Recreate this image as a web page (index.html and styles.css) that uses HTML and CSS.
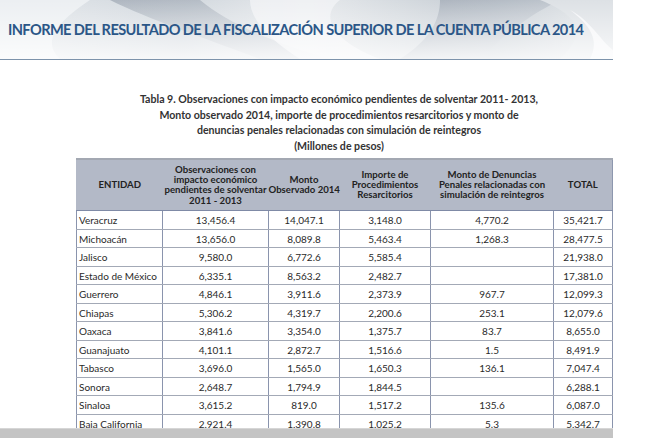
FILE: index.html
```html
<!DOCTYPE html>
<html lang="es">
<head>
<meta charset="utf-8">
<title>Informe</title>
<link rel="stylesheet" href="styles.css">
</head>
<body>
<header class="banner">
  <svg class="banner-bg" width="613" height="59" viewBox="0 0 613 59" preserveAspectRatio="none" aria-hidden="true">
    <defs>
      <linearGradient id="base" x1="0" y1="0" x2="1" y2="0">
        <stop offset="0" stop-color="#e2e6ea"/>
        <stop offset="0.3" stop-color="#d2d8de"/>
        <stop offset="0.5" stop-color="#e6e9ec"/>
        <stop offset="0.8" stop-color="#c5ccd3"/>
        <stop offset="1" stop-color="#e4e7ea"/>
      </linearGradient>
      <linearGradient id="fade" x1="0" y1="0" x2="0" y2="1">
        <stop offset="0" stop-color="#ffffff" stop-opacity="0"/>
        <stop offset="1" stop-color="#ffffff" stop-opacity="0.8"/>
      </linearGradient>
      <linearGradient id="dark" x1="0" y1="0" x2="1" y2="1">
        <stop offset="0" stop-color="#a4adb8"/>
        <stop offset="1" stop-color="#d3d8de"/>
      </linearGradient>
    </defs>
    <rect width="613" height="59" fill="url(#base)"/>
    <path d="M0 0 H90 C60 20 40 40 60 59 H0 Z" fill="#eceff2"/>
    <path d="M110 0 H200 C230 25 280 45 330 59 H260 C210 40 150 20 110 0 Z" fill="url(#dark)" opacity="0.8"/>
    <path d="M250 0 H340 C320 15 330 40 380 59 H300 C270 40 250 20 250 0 Z" fill="#f1f3f5" opacity="0.8"/>
    <path d="M440 0 H560 C520 20 500 40 480 59 H400 C430 40 440 20 440 0 Z" fill="url(#dark)" opacity="0.9"/>
    <path d="M540 0 H613 V59 H560 C580 40 590 20 540 0 Z" fill="#dde1e5"/>
    <path d="M570 10 C590 20 600 40 613 50 V59 H590 C600 40 590 25 570 10 Z" fill="#f4f5f7"/>
    <rect width="613" height="59" fill="url(#fade)"/>
  </svg>
  <h1 class="banner-title">INFORME DEL RESULTADO DE LA FISCALIZACIÓN SUPERIOR DE LA CUENTA PÚBLICA 2014</h1>
</header>
<main class="page">
  <div class="caption">
    <p>Tabla 9. Observaciones con impacto económico pendientes de solventar 2011- 2013,</p>
    <p>Monto observado 2014, importe de procedimientos resarcitorios y monto de</p>
    <p>denuncias penales relacionadas con simulación de reintegros</p>
    <p>(Millones de pesos)</p>
  </div>
  <table class="data">
    <colgroup>
      <col class="c1"><col class="c2"><col class="c3"><col class="c4"><col class="c5"><col class="c6">
    </colgroup>
    <thead>
      <tr>
        <th>ENTIDAD</th>
        <th>Observaciones con<br>impacto económico<br>pendientes de solventar<br>2011 - 2013</th>
        <th>Monto<br>Observado 2014</th>
        <th>Importe de<br>Procedimientos<br>Resarcitorios</th>
        <th>Monto de Denuncias<br>Penales relacionadas con<br>simulación de reintegros</th>
        <th>TOTAL</th>
      </tr>
    </thead>
    <tbody>
      <tr><td>Veracruz</td><td>13,456.4</td><td>14,047.1</td><td>3,148.0</td><td>4,770.2</td><td>35,421.7</td></tr>
      <tr><td>Michoacán</td><td>13,656.0</td><td>8,089.8</td><td>5,463.4</td><td>1,268.3</td><td>28,477.5</td></tr>
      <tr><td>Jalisco</td><td>9,580.0</td><td>6,772.6</td><td>5,585.4</td><td></td><td>21,938.0</td></tr>
      <tr><td>Estado de México</td><td>6,335.1</td><td>8,563.2</td><td>2,482.7</td><td></td><td>17,381.0</td></tr>
      <tr><td>Guerrero</td><td>4,846.1</td><td>3,911.6</td><td>2,373.9</td><td>967.7</td><td>12,099.3</td></tr>
      <tr><td>Chiapas</td><td>5,306.2</td><td>4,319.7</td><td>2,200.6</td><td>253.1</td><td>12,079.6</td></tr>
      <tr><td>Oaxaca</td><td>3,841.6</td><td>3,354.0</td><td>1,375.7</td><td>83.7</td><td>8,655.0</td></tr>
      <tr><td>Guanajuato</td><td>4,101.1</td><td>2,872.7</td><td>1,516.6</td><td>1.5</td><td>8,491.9</td></tr>
      <tr><td>Tabasco</td><td>3,696.0</td><td>1,565.0</td><td>1,650.3</td><td>136.1</td><td>7,047.4</td></tr>
      <tr><td>Sonora</td><td>2,648.7</td><td>1,794.9</td><td>1,844.5</td><td></td><td>6,288.1</td></tr>
      <tr><td>Sinaloa</td><td>3,615.2</td><td>819.0</td><td>1,517.2</td><td>135.6</td><td>6,087.0</td></tr>
      <tr><td>Baja California</td><td>2,921.4</td><td>1,390.8</td><td>1,025.2</td><td>5.3</td><td>5,342.7</td></tr>
    </tbody>
  </table>
</main>
<div class="scrollbar"></div>
</body>
</html>
```
FILE: styles.css
```css
html, body {
  margin: 0;
  padding: 0;
  background: #ffffff;
}
body {
  width: 670px;
  height: 440px;
  overflow: hidden;
  font-family: Lato, "Open Sans", sans-serif;
}
.banner {
  position: relative;
  width: 613px;
  height: 59px;
  border-bottom: 1px solid #7d93ab;
  display: flex;
  align-items: center;
}
.banner-bg {
  position: absolute;
  left: 0;
  top: 0;
}
.banner-title {
  position: relative;
  margin: 0 0 0 8px;
  font-size: 14.6px;
  font-weight: 700;
  color: #2b5687;
  letter-spacing: -0.6px;
  white-space: nowrap;
  line-height: 1;
  padding-top: 2px;
}
.page {
  width: 613px;
  height: 368px;
  overflow: hidden;
}
.caption {
  padding-top: 32px;
  width: 613px;
  box-sizing: border-box;
  padding-left: 65px;
  text-align: center;
  color: #333333;
  font-size: 10.6px;
  font-weight: 700;
}
.caption p {
  margin: 0;
  line-height: 15.6px;
}
.data {
  margin: 4px 0 0 76px;
  border-collapse: collapse;
  table-layout: fixed;
  width: 536px;
  font-size: 10px;
  color: #2a2a2a;
}
.c1 { width: 86px; }
.c2 { width: 106px; }
.c3 { width: 71px; }
.c4 { width: 91px; }
.c5 { width: 123px; }
.c6 { width: 59px; }
.data thead th {
  background: #b3b9c7;
  height: 50px;
  padding: 0;
  font-weight: 700;
  font-size: 9.6px;
  line-height: 10.2px;
  white-space: nowrap;
  color: #222222;
  border-top: 2px solid #a3a8b2;
  border-bottom: 1px solid #7f8aa6;
}
.data thead th:first-child { border-left: 1px solid #b3b9c7; }
.data thead th:last-child { border-right: 1px solid #8d97ae; }
.data td {
  height: 17.5px;
  padding: 0;
  text-align: center;
  border: 1px solid #8a94ad;
  border-top-color: #a3a9b6;
  border-bottom-color: #a3a9b6;
}
.data td:first-child {
  text-align: left;
  padding-left: 2px;
}
.scrollbar {
  width: 613px;
  height: 9px;
  background: #c4c4c4;
  border-top: 1px solid #d6d6d6;
}
```
